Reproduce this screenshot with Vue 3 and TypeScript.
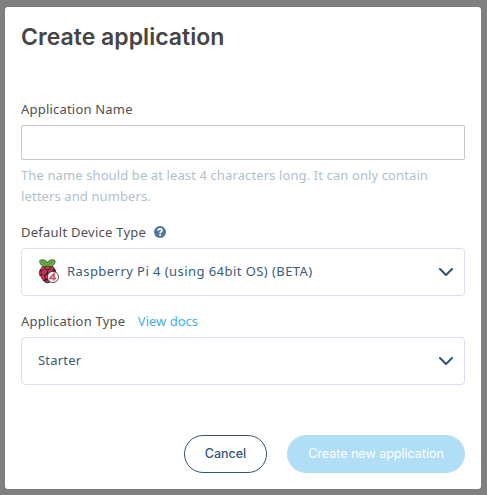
<script setup lang="ts">
import { ref } from 'vue'

const name = ref('')
const deviceType = 'Raspberry Pi 4 (using 64bit OS) (BETA)'
const applicationType = 'Starter'
</script>

<template>
  <div class="overlay">
    <form class="modal" @submit.prevent>
      <h1 class="title"><span>Create application</span></h1>

      <label class="label name-label" for="app-name"><span>Application Name</span></label>
      <input id="app-name" v-model="name" class="input" type="text" />
      <p class="help"><span>The name should be at least 4 characters long. It can only contain</span><br /><span>letters and numbers.</span></p>

      <div class="label device-label">
        <span class="device-text">Default Device Type</span>
        <svg class="question" viewBox="0 0 12 12">
          <circle cx="6" cy="6" r="6" fill="#527699" />
          <path d="M4 4.7C4.1 3.5 4.9 2.9 6 2.9c1.2 0 2 .6 2 1.6C8 5.8 6.1 5.7 6.1 7.3" fill="none" stroke="#fff" stroke-width="1.7" />
          <circle cx="6.1" cy="9.1" r="1" fill="#fff" />
        </svg>
      </div>
      <button class="select" type="button">
        <svg class="raspberry" viewBox="0 0 22 25">
          <path d="M9.4 5.8c3.4 0 6.5 1.5 7.3 4 2 1.8 2 5.3.2 7.1-.8 3.3-4.1 6.8-7.3 7.4-3-.5-5.8-3.2-6.6-6.5C.2 16 .2 12.2 2.4 10.2c.8-2.7 3.8-4.4 7-4.4Z" fill="#2b1b22" />
          <g fill="#c73350">
            <ellipse cx="4.7" cy="9.3" rx="1.9" ry="1.5" transform="rotate(-40 4.7 9.3)" />
            <ellipse cx="14" cy="9.3" rx="1.9" ry="1.5" transform="rotate(40 14 9.3)" />
            <ellipse cx="9.4" cy="9" rx="2.4" ry="1.8" />
            <ellipse cx="6.1" cy="13.2" rx="3" ry="2.4" transform="rotate(-40 6.1 13.2)" />
            <ellipse cx="12.8" cy="13.2" rx="3" ry="2.4" transform="rotate(40 12.8 13.2)" />
            <ellipse cx="1.9" cy="14" rx="1" ry="2.5" />
            <ellipse cx="16.9" cy="13.5" rx=".8" ry="2" />
            <ellipse cx="4.9" cy="18.5" rx="1.8" ry="2.7" transform="rotate(-25 4.9 18.5)" />
            <ellipse cx="9.5" cy="17.9" rx="2.4" ry="2.3" />
            <ellipse cx="9.4" cy="22.3" rx="2.2" ry="1.1" />
          </g>
          <path d="M9.4 7.1C5.4 8.8 2 6 1.7 2.6c-.2-1.2.1-1.5 1.5-1.7 2.8-.6 5.5.5 6.2 3.1.7-2.6 3.4-3.7 6.2-3.1 1.4.2 1.7.5 1.5 1.7-.3 3.4-3.7 6.2-7.7 4.5Z" fill="#6aad45" stroke="#2f4929" stroke-width=".75" />
          <path d="m4.4 2.7 4.3 3.2M14.4 2.7l-4.3 3.2" fill="none" stroke="#3b6c2b" stroke-width=".6" />
          <circle cx="14.9" cy="18" r="5.6" fill="#fff" stroke="#302b2e" stroke-width=".8" />
          <path d="M16 21.8v-7.2l-4.1 4.9h6.3" fill="none" stroke="#da4258" stroke-width="1.5" />
        </svg>
        <span class="device-value">{{ deviceType }}</span>
        <svg class="chevron" viewBox="0 0 14 9"><path d="m1 1 6 6 6-6" /></svg>
      </button>

      <div class="label type-label">
        <span class="type-text">Application Type</span>
        <a class="docs">View docs</a>
      </div>
      <button class="select" type="button">
        <span class="type-value">{{ applicationType }}</span>
        <svg class="chevron" viewBox="0 0 14 9"><path d="m1 1 6 6 6-6" /></svg>
      </button>

      <footer class="actions">
        <button class="button cancel" type="button"><span>Cancel</span></button>
        <button class="button create" type="submit" disabled><span>Create new application</span></button>
      </footer>
    </form>
  </div>
</template>

<style>
body { background: #7f7f7f; }
</style>

<style scoped>
* { box-sizing: border-box; }
.overlay {
  height: 495px;
  padding: 7px 6px 6px 5px;
  background: #7f7f7f;
  font-family: "Noto Sans", sans-serif;
  font-size: 13px;
  color: #505050;
}
.modal {
  height: 482px;
  padding: 14px 16px 16px;
  border-radius: 3px;
  background: #fff;
  display: flex;
  flex-direction: column;
}
.title {
  margin: 0;
  height: 32px;
  font: 600 23px/32px Inter, sans-serif;
  letter-spacing: .03px;
  color: #454545;
}
.label {
  display: flex;
  align-items: center;
  height: 20px;
  letter-spacing: .2px;
  white-space: nowrap;
}
.name-label { margin-top: 46px; }
.input {
  width: 100%;
  height: 35px;
  margin: 6px 0 0;
  padding: 0 12px;
  border: 1px solid #c6c8ca;
  border-radius: 2px;
  background: #fff;
  font: inherit;
  outline: 0;
}
.help {
  margin: 5px 0 0;
  line-height: 21px;
  letter-spacing: .11px;
  color: #b0bfcc;
  white-space: nowrap;
}
.device-label {
  width: 145px;
  margin-top: 15px;
}
.device-text { letter-spacing: .25px; }
.question {
  width: 12px;
  height: 12px;
  flex: none;
  margin-left: auto;
}
.select {
  display: flex;
  align-items: center;
  width: 100%;
  height: 48px;
  margin: 6px 0 0;
  padding: 0 11px 2px 16px;
  border: 1px solid #dadeee;
  border-radius: 4px;
  background: #fff;
  color: #3a5b7a;
  font: inherit;
  letter-spacing: .2px;
  white-space: nowrap;
}
.device-value { letter-spacing: .44px; }
.raspberry {
  width: 22px;
  height: 25px;
  margin: 1px 7px 0 0;
}
.chevron {
  width: 14px;
  height: 9px;
  margin: 2px 0 0 auto;
  fill: none;
  stroke: #315475;
  stroke-width: 2;
  stroke-linecap: round;
  stroke-linejoin: round;
}
.type-label {
  width: 177px;
  margin-top: 15px;
  justify-content: space-between;
}
.type-text { letter-spacing: .22px; }
.docs {
  color: #43afe9;
  letter-spacing: 0;
}
.actions {
  display: flex;
  justify-content: flex-end;
  gap: 20px;
  margin-top: auto;
}
.button {
  height: 38px;
  padding: 0;
  border: 1px solid #315475;
  border-radius: 19px;
  background: #fff;
  font: 400 12.5px/36px Inter, sans-serif;
  color: #315475;
  white-space: nowrap;
}
.cancel { width: 83px; font-weight: 500; }
.create {
  width: 178px;
  border-color: #b0def7;
  background: #b0def7;
  color: #fff;
}
</style>
